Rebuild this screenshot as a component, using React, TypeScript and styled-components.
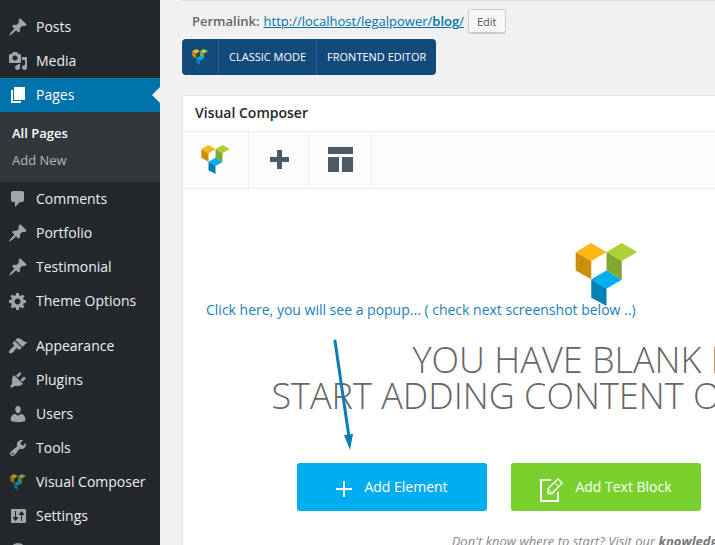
import React from "react";
import styled, { createGlobalStyle, css } from "styled-components";

const GlobalStyle = createGlobalStyle`
  *, *::before, *::after { box-sizing: border-box; }
  body {
    margin: 0;
    background: #f1f1f1;
    color: #444;
    font-family: "Open Sans", "Noto Sans", sans-serif;
    font-size: 13px;
  }
  button { font-family: inherit; cursor: pointer; }
`;

const Shell = styled.div`
  position: relative;
  display: flex;
  height: 100vh;
  overflow: hidden;
`;

/* ---------- Sidebar ---------- */

const Sidebar = styled.nav`
  flex: 0 0 160px;
  padding-top: 10px;
  background: #23282d;
`;

const MenuList = styled.ul`
  list-style: none;
  margin: 0 0 11px;
  padding: 0;
`;

const MenuLink = styled.a<{ $current?: boolean }>`
  position: relative;
  display: flex;
  align-items: center;
  gap: 8px;
  height: 34px;
  padding: 0 8px;
  color: #eee;
  font-size: 14px;
  line-height: 18px;
  text-decoration: none;
  white-space: nowrap;

  svg { flex: none; fill: #a0a5aa; }

  ${(p) =>
    p.$current &&
    css`
      background: #0073aa;
      color: #fff;
      svg { fill: #fff; }
      &::after {
        content: "";
        position: absolute;
        right: 0;
        top: 9px;
        border: 8px solid transparent;
        border-left-width: 0;
        border-right-color: #f1f1f1;
      }
    `}
`;

const SubMenu = styled.ul`
  list-style: none;
  margin: 0;
  padding: 8px 12px;
  background: #32373c;
`;

const SubLink = styled.a<{ $current?: boolean }>`
  display: block;
  color: ${(p) => (p.$current ? "#fff" : "#b4b9be")};
  font-size: 13px;
  font-weight: ${(p) => (p.$current ? 600 : 400)};
  line-height: 27px;
  text-decoration: none;
`;

const CollapseButton = styled.button`
  display: block;
  margin: -3px 0 0;
  padding: 0 8px;
  border: 0;
  background: none;
  svg { display: block; fill: #a0a5aa; }
`;

/* ---------- Main column ---------- */

const Main = styled.main`
  flex: 1 0 auto;
  min-width: 870px;
  padding: 0 0 0 22px;
`;

const Permalink = styled.div`
  display: flex;
  align-items: center;
  gap: 4px;
  height: 39px;
  padding: 2px 10px 0;
  border-top: 1px solid #ddd;
  color: #666;
  line-height: 24px;
  strong { font-weight: 600; }
  a { color: #0073aa; }
`;

const EditButton = styled.button`
  height: 24px;
  padding: 0 8px;
  border: 1px solid #ccc;
  border-radius: 3px;
  background: #f7f7f7;
  box-shadow: 0 1px 0 #ccc;
  color: #555;
  font-size: 11px;
`;

const ModeBar = styled.div`
  display: inline-flex;
  height: 36px;
  border-radius: 4px;
  background: #114a7b;
  overflow: hidden;
`;

const ModeCell = styled.button`
  display: flex;
  align-items: center;
  padding: 0 10px;
  border: 0;
  border-right: 1px solid #2b608e;
  background: none;
  color: #fff;
  font-size: 11px;
  line-height: 14px;
  white-space: nowrap;
  &:last-child { border-right: 0; }
`;

const Panel = styled.section`
  margin-top: 20px;
  border: 1px solid #e5e5e5;
  background: #fff;
`;

const PanelTitle = styled.h2`
  margin: 0;
  padding: 7px 12px 9px;
  border-bottom: 1px solid #eee;
  color: #23282d;
  font-size: 14px;
  font-weight: 600;
  line-height: 19px;
`;

const Toolbar = styled.div`
  display: flex;
  height: 57px;
  border-bottom: 1px solid #eee;
  background: #fcfcfc;
`;

const Tool = styled.button<{ $wide?: boolean }>`
  display: flex;
  align-items: center;
  justify-content: center;
  width: ${(p) => (p.$wide ? 66 : 61)}px;
  padding: 0 0 2px;
  border: 0;
  border-right: 1px solid #f0f0f0;
  background: none;
`;

const Welcome = styled.div`
  display: flex;
  flex-direction: column;
  align-items: center;
  padding: 54px 0 40px;
`;

const WelcomeTitle = styled.h1`
  margin: 36px 0 0;
  color: #666;
  font-size: 36px;
  font-weight: 300;
  line-height: 36px;
  text-align: center;
  white-space: nowrap;
`;

const Actions = styled.div`
  display: flex;
  gap: 24px;
  margin-top: 49px;
`;

const ActionButton = styled.button<{ $color: string }>`
  display: flex;
  align-items: center;
  justify-content: center;
  gap: 12px;
  width: 190px;
  height: 48px;
  padding: 0 6px 2px;
  border: 0;
  border-radius: 3px;
  background: ${(p) => p.$color};
  color: #fff;
  font-size: 14px;
  svg { margin-top: 6px; }
`;

const Hint = styled.p`
  margin: 20px 0 0;
  color: #888;
  font-size: 13px;
  font-style: italic;
  line-height: 20px;
  a { color: #777; font-weight: 700; text-decoration: none; }
`;

/* ---------- Annotation over the page ---------- */

const Note = styled.p`
  position: absolute;
  left: 206px;
  top: 300px;
  margin: 0;
  color: #1a7fb8;
  font-size: 14px;
  line-height: 20px;
  white-space: nowrap;
`;

const NoteArrow = styled.svg`
  position: absolute;
  left: 330px;
  top: 336px;
  pointer-events: none;
`;

/* ---------- Icons ---------- */

const PATHS = {
  pin: "M10.44 3.02l1.82-1.82 6.36 6.35-1.83 1.82c-1.05-.68-2.48-.57-3.41.36l-.75.75c-.92.93-1.04 2.35-.35 3.41l-1.83 1.82-2.41-2.41-2.8 2.79c-.42.42-3.38 2.71-3.8 2.29s1.86-3.39 2.28-3.81l2.79-2.79L4.1 9.36l1.83-1.82c1.05.69 2.48.57 3.4-.36l.75-.75c.93-.92 1.05-2.35.36-3.41z",
  media:
    "M13 11V4c0-.55-.45-1-1-1h-1.67L9 1H5L3.67 3H2c-.55 0-1 .45-1 1v7c0 .55.45 1 1 1h10c.55 0 1-.45 1-1zM7 4.500c1.380 0 2.500 1.120 2.500 2.500S8.380 9.500 7 9.500 4.500 8.380 4.500 7 5.620 4.500 7 4.500zM14 6h5v10.500c0 1.380-1.120 2.500-2.500 2.500S14 17.880 14 16.500s1.120-2.500 2.500-2.500c.17 0 .34.02.5.05V9h-3V6zm-4 8.050V13h2v3.500c0 1.380-1.120 2.500-2.500 2.500S7 17.880 7 16.500 8.120 14 9.500 14c.17 0 .34.02.5.05z",
  page: "M6 15V2h11v13H6zm-1 1h8v2H3V5h2v11z",
  comment:
    "M5 2h9c1.1 0 2 .9 2 2v7c0 1.1-.9 2-2 2h-2l-5 5v-5H5c-1.1 0-2-.9-2-2V4c0-1.1.9-2 2-2z",
  gear: "M18 12h-2.18c-.17.7-.44 1.35-.81 1.93l1.54 1.54-2.1 2.1-1.54-1.54c-.58.36-1.23.63-1.91.79V19H8v-2.18c-.68-.16-1.33-.43-1.91-.79l-1.54 1.54-2.12-2.12 1.54-1.54c-.36-.58-.63-1.23-.79-1.91H1V9.03h2.17c.16-.7.44-1.35.8-1.94L2.43 5.55l2.1-2.1 1.54 1.54c.58-.37 1.24-.64 1.93-.81V2h3v2.18c.68.16 1.33.43 1.91.79l1.54-1.54 2.12 2.12-1.54 1.54c.36.59.64 1.24.8 1.94H18V12zm-8.5 1.5c1.66 0 3-1.34 3-3s-1.34-3-3-3-3 1.34-3 3 1.34 3 3 3z",
  brush:
    "M14.48 11.06L7.41 3.99l1.5-1.5c.5-.56 2.3-.47 3.51.32 1.21.8 1.43 1.28 2.91 2.1 1.18.64 2.45 1.26 4.45.85zm-.71.71L6.7 4.7 4.93 6.47c-.39.39-.39 1.02 0 1.41l1.06 1.06c.39.39.39 1.03 0 1.42-.6.6-1.43 1.11-2.21 1.69-.35.26-.7.53-1.01.84C1.43 14.23.4 16.08 1.4 17.07c.99 1 2.84-.03 4.18-1.36.31-.31.58-.66.85-1.02.57-.78 1.08-1.61 1.69-2.21.39-.39 1.02-.39 1.41 0l1.06 1.06c.39.39 1.02.39 1.41 0z",
  plug: "M13.11 4.36L9.87 7.6 8 5.73l3.24-3.24c.35-.34 1.05-.2 1.56.32.52.51.66 1.21.31 1.55zm-8 1.77l.91-1.12 9.01 9.01-1.19.84c-.71.71-2.63 1.16-3.82 1.16H6.14L4.9 17.26c-.59.59-1.54.59-2.12 0-.59-.58-.59-1.53 0-2.12l1.24-1.24v-3.88c0-1.13.4-3.19 1.09-3.89zm7.26 3.97l3.24-3.24c.34-.35 1.04-.21 1.55.31.52.51.66 1.21.31 1.55l-3.24 3.25z",
  user: "M10 9.25c-2.27 0-2.73-3.44-2.73-3.44C7 4.02 7.82 2 9.97 2c2.16 0 2.98 2.02 2.71 3.81 0 0-.41 3.44-2.68 3.44zm0 2.57L12.72 10c2.39 0 4.52 2.33 4.52 4.53v2.49s-3.65 1.13-7.24 1.13c-3.65 0-7.24-1.13-7.24-1.13v-2.49c0-2.25 1.94-4.48 4.47-4.48z",
  wrench:
    "M16.68 9.77c-1.34 1.34-3.3 1.67-4.95.99l-5.41 6.52c-.99.99-2.59.99-3.58 0s-.99-2.59 0-3.57l6.52-5.42c-.68-1.65-.35-3.61.99-4.95 1.28-1.28 3.12-1.62 4.72-1.06l-2.89 2.89 2.82 2.82 2.86-2.87c.53 1.58.18 3.39-1.08 4.65zM3.81 16.21c.4.39 1.04.39 1.43 0 .4-.4.4-1.04 0-1.43-.39-.4-1.03-.4-1.43 0-.39.39-.39 1.03 0 1.43z",
  sliders:
    "M4 3h13c.55 0 1 .45 1 1v12c0 .55-.45 1-1 1H4c-.55 0-1-.45-1-1V4c0-.55.45-1 1-1zM7 5v6H5v1l2.500 3 2.500-3v-1H8V5zM13 15V9h-2V8l2.500-3 2.500 3v1H14v6z",
  collapse:
    "M10 2a8 8 0 1 0 0 16 8 8 0 0 0 0-16zm2 12l-5-4 5-4z",
};

type IconName = keyof typeof PATHS;

const Icon = ({ name }: { name: IconName }) => (
  <svg width="20" height="20" viewBox="0 0 20 20" aria-hidden="true">
    <path fillRule="evenodd" d={PATHS[name]} />
  </svg>
);

const LogoSvg = styled.svg<{ $dim?: boolean }>`
  display: block;
  opacity: ${(p) => (p.$dim ? 0.7 : 1)};
`;

const Logo = ({ size, dim }: { size: number; dim?: boolean }) => (
  <LogoSvg $dim={dim} width={size} height={size} viewBox="0 0 186 190" aria-hidden="true">
    <path fill="#fcb813" d="M0 28 46 0 93 27 47 55z" />
    <path fill="#c98f0d" d="M0 28 47 55V109L0 83z" />
    <path fill="#aed13a" d="M93 27 139 0 186 27 139 54z" />
    <path fill="#84a82c" d="M93 27 139 54V111L93 83z" />
    <path fill="#00adee" d="M47 109 93 83 139 111 93 138z" />
    <path fill="#0082b5" d="M47 109 93 138V190L47 165z" />
  </LogoSvg>
);

const SidebarLogo = styled.span`
  display: flex;
  flex: none;
  justify-content: center;
  width: 20px;
`;

/* ---------- Page ---------- */

type Item = { label: string; icon?: IconName };

const CONTENT_ITEMS: Item[] = [
  { label: "Comments", icon: "comment" },
  { label: "Portfolio", icon: "pin" },
  { label: "Testimonial", icon: "pin" },
  { label: "Theme Options", icon: "gear" },
];

const ADMIN_ITEMS: Item[] = [
  { label: "Appearance", icon: "brush" },
  { label: "Plugins", icon: "plug" },
  { label: "Users", icon: "user" },
  { label: "Tools", icon: "wrench" },
  { label: "Visual Composer" },
  { label: "Settings", icon: "sliders" },
];

const MenuItem = ({ label, icon }: Item) => (
  <li>
    <MenuLink href="#">
      {icon ? (
        <Icon name={icon} />
      ) : (
        <SidebarLogo>
          <Logo size={16} dim />
        </SidebarLogo>
      )}
      {label}
    </MenuLink>
  </li>
);

export default function App() {
  return (
    <>
      <GlobalStyle />
      <Shell>
        <Sidebar aria-label="Main menu">
          <MenuList>
            <MenuItem label="Posts" icon="pin" />
            <MenuItem label="Media" icon="media" />
            <li>
              <MenuLink href="#" $current>
                <Icon name="page" />
                Pages
              </MenuLink>
              <SubMenu>
                <li>
                  <SubLink href="#" $current>
                    All Pages
                  </SubLink>
                </li>
                <li>
                  <SubLink href="#">Add New</SubLink>
                </li>
              </SubMenu>
            </li>
            {CONTENT_ITEMS.map((item) => (
              <MenuItem key={item.label} {...item} />
            ))}
          </MenuList>
          <MenuList>
            {ADMIN_ITEMS.map((item) => (
              <MenuItem key={item.label} {...item} />
            ))}
          </MenuList>
          <CollapseButton aria-label="Collapse menu">
            <Icon name="collapse" />
          </CollapseButton>
        </Sidebar>

        <Main>
          <Permalink>
            <strong>Permalink:</strong>
            <a href="#">
              http://localhost/legalpower/<strong>blog</strong>/
            </a>
            <EditButton>Edit</EditButton>
          </Permalink>

          <ModeBar>
            <ModeCell aria-label="Visual Composer">
              <Logo size={16} />
            </ModeCell>
            <ModeCell>CLASSIC MODE</ModeCell>
            <ModeCell>FRONTEND EDITOR</ModeCell>
          </ModeBar>

          <Panel>
            <PanelTitle>Visual Composer</PanelTitle>
            <Toolbar>
              <Tool $wide aria-label="About Visual Composer">
                <Logo size={29} />
              </Tool>
              <Tool aria-label="Add element">
                <svg width="19" height="19" viewBox="0 0 19 19" fill="#4f5b64">
                  <path d="M7 0h5v7h7v5h-7v7H7v-7H0V7h7z" />
                </svg>
              </Tool>
              <Tool aria-label="Templates">
                <svg width="25" height="25" viewBox="0 0 25 25" fill="#4f5b64">
                  <path d="M0 0h25v7H0zM0 10h11v15H0zM14 10h11v15H14z" />
                </svg>
              </Tool>
            </Toolbar>

            <Welcome>
              <Logo size={63} />
              <WelcomeTitle>
                YOU HAVE BLANK PAGE
                <br />
                START ADDING CONTENT OR TEMPLATES
              </WelcomeTitle>
              <Actions>
                <ActionButton $color="#00aeef">
                  <svg width="16" height="16" viewBox="0 0 16 16" stroke="#fff" strokeWidth="2">
                    <path d="M8 0v16M0 8h16" />
                  </svg>
                  Add Element
                </ActionButton>
                <ActionButton $color="#7ad02c">
                  <svg width="23" height="25" viewBox="0 0 23 25" fill="none" stroke="#fff">
                    <path strokeWidth="2" d="M11 3H1v21h17v-9" />
                    <path strokeWidth="1.500" d="M8 16.500v-5l10-9.500 4 4-10 10.500z" />
                    <path strokeWidth="1" d="M14.500 5.500l4 4M8 11.500l4 5" />
                  </svg>
                  Add Text Block
                </ActionButton>
                <ActionButton $color="#a3a3a3">Add Template</ActionButton>
              </Actions>
              <Hint>
                Don't know where to start? Visit our <a href="#">knowledge base</a>.
              </Hint>
            </Welcome>
          </Panel>
        </Main>

        <Note>Click here, you will see a popup... ( check next screenshot below ..)</Note>
        <NoteArrow width="28" height="116" viewBox="0 0 28 116" aria-hidden="true">
          <path d="M5 5 19 101" stroke="#0b7db8" strokeWidth="3" strokeLinecap="round" />
          <path d="M14 99 23 98 20 114z" fill="#0b7db8" />
        </NoteArrow>
      </Shell>
    </>
  );
}
